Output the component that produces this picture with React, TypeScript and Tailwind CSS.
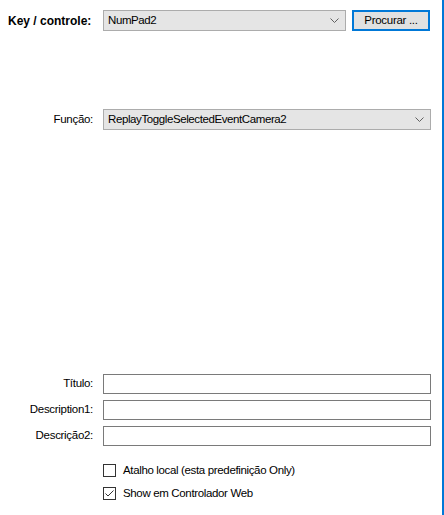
import React from "react"

const font = { fontFamily: '"Liberation Sans", Arial, sans-serif' }

function Chevron() {
  return (
    <svg width="9" height="5" viewBox="0 0 9 5" className="shrink-0">
      <path d="M0.5 0.5 L4.5 4.5 L8.5 0.5" fill="none" stroke="#606060" strokeWidth="1" />
    </svg>
  )
}

function Combo({ value, width }: { value: string; width: string }) {
  return (
    <div
      className={`${width} h-[21px] flex items-center justify-between border border-[#acacac] bg-[#e5e5e5] pl-[4px] pr-[6px] text-[11.5px] tracking-[-0.4px] text-black`}
    >
      <span>{value}</span>
      <Chevron />
    </div>
  )
}

function Field({ label }: { label: string }) {
  return (
    <div className="flex items-center">
      <div className="w-[103px] pr-[10px] text-right text-[11.5px] tracking-[-0.3px] text-black">{label}</div>
      <div className="w-[328px] h-[20px] border border-[#7a7a7a] bg-white" />
    </div>
  )
}

function Check({ label, checked }: { label: string; checked?: boolean }) {
  return (
    <div className="flex items-center h-[13px]">
      <div className="ml-[103px] w-[13px] h-[13px] border border-[#333333] bg-white flex items-center justify-center">
        {checked && (
          <svg width="11" height="11" viewBox="0 0 11 11">
            <path d="M1.5 5.5 L4 8 L9.5 2.5" fill="none" stroke="#333333" strokeWidth="1" />
          </svg>
        )}
      </div>
      <span className="ml-[7px] text-[11.5px] tracking-[-0.35px] text-black">{label}</span>
    </div>
  )
}

export default function App() {
  return (
    <div style={font} className="w-[444px] h-[515px] bg-white border-r-2 border-[#0078d7] overflow-hidden">
      {/* Key row */}
      <div className="flex items-center pt-[10px]">
        <div className="w-[103px] pl-[8px] text-[12px] font-bold text-black">Key / controle:</div>
        <Combo value="NumPad2" width="w-[243px]" />
        <button className="ml-[6px] w-[78px] h-[21px] bg-[#e1e1e1] border-2 border-[#0078d7] text-[11.5px] tracking-[-0.3px] text-black">
          Procurar ...
        </button>
      </div>

      {/* Função */}
      <div className="flex items-center mt-[78px]">
        <div className="w-[103px] pr-[10px] text-right text-[11.5px] tracking-[-0.3px] text-black">Função:</div>
        <Combo value="ReplayToggleSelectedEventCamera2" width="w-[328px]" />
      </div>

      {/* Text fields */}
      <div className="flex flex-col gap-[6px] mt-[244px]">
        <Field label="Título:" />
        <Field label="Description1:" />
        <Field label="Descrição2:" />
      </div>

      {/* Checkboxes */}
      <div className="flex flex-col gap-[10px] mt-[18px]">
        <Check label="Atalho local (esta predefinição Only)" />
        <Check label="Show em Controlador Web" checked />
      </div>
    </div>
  )
}
